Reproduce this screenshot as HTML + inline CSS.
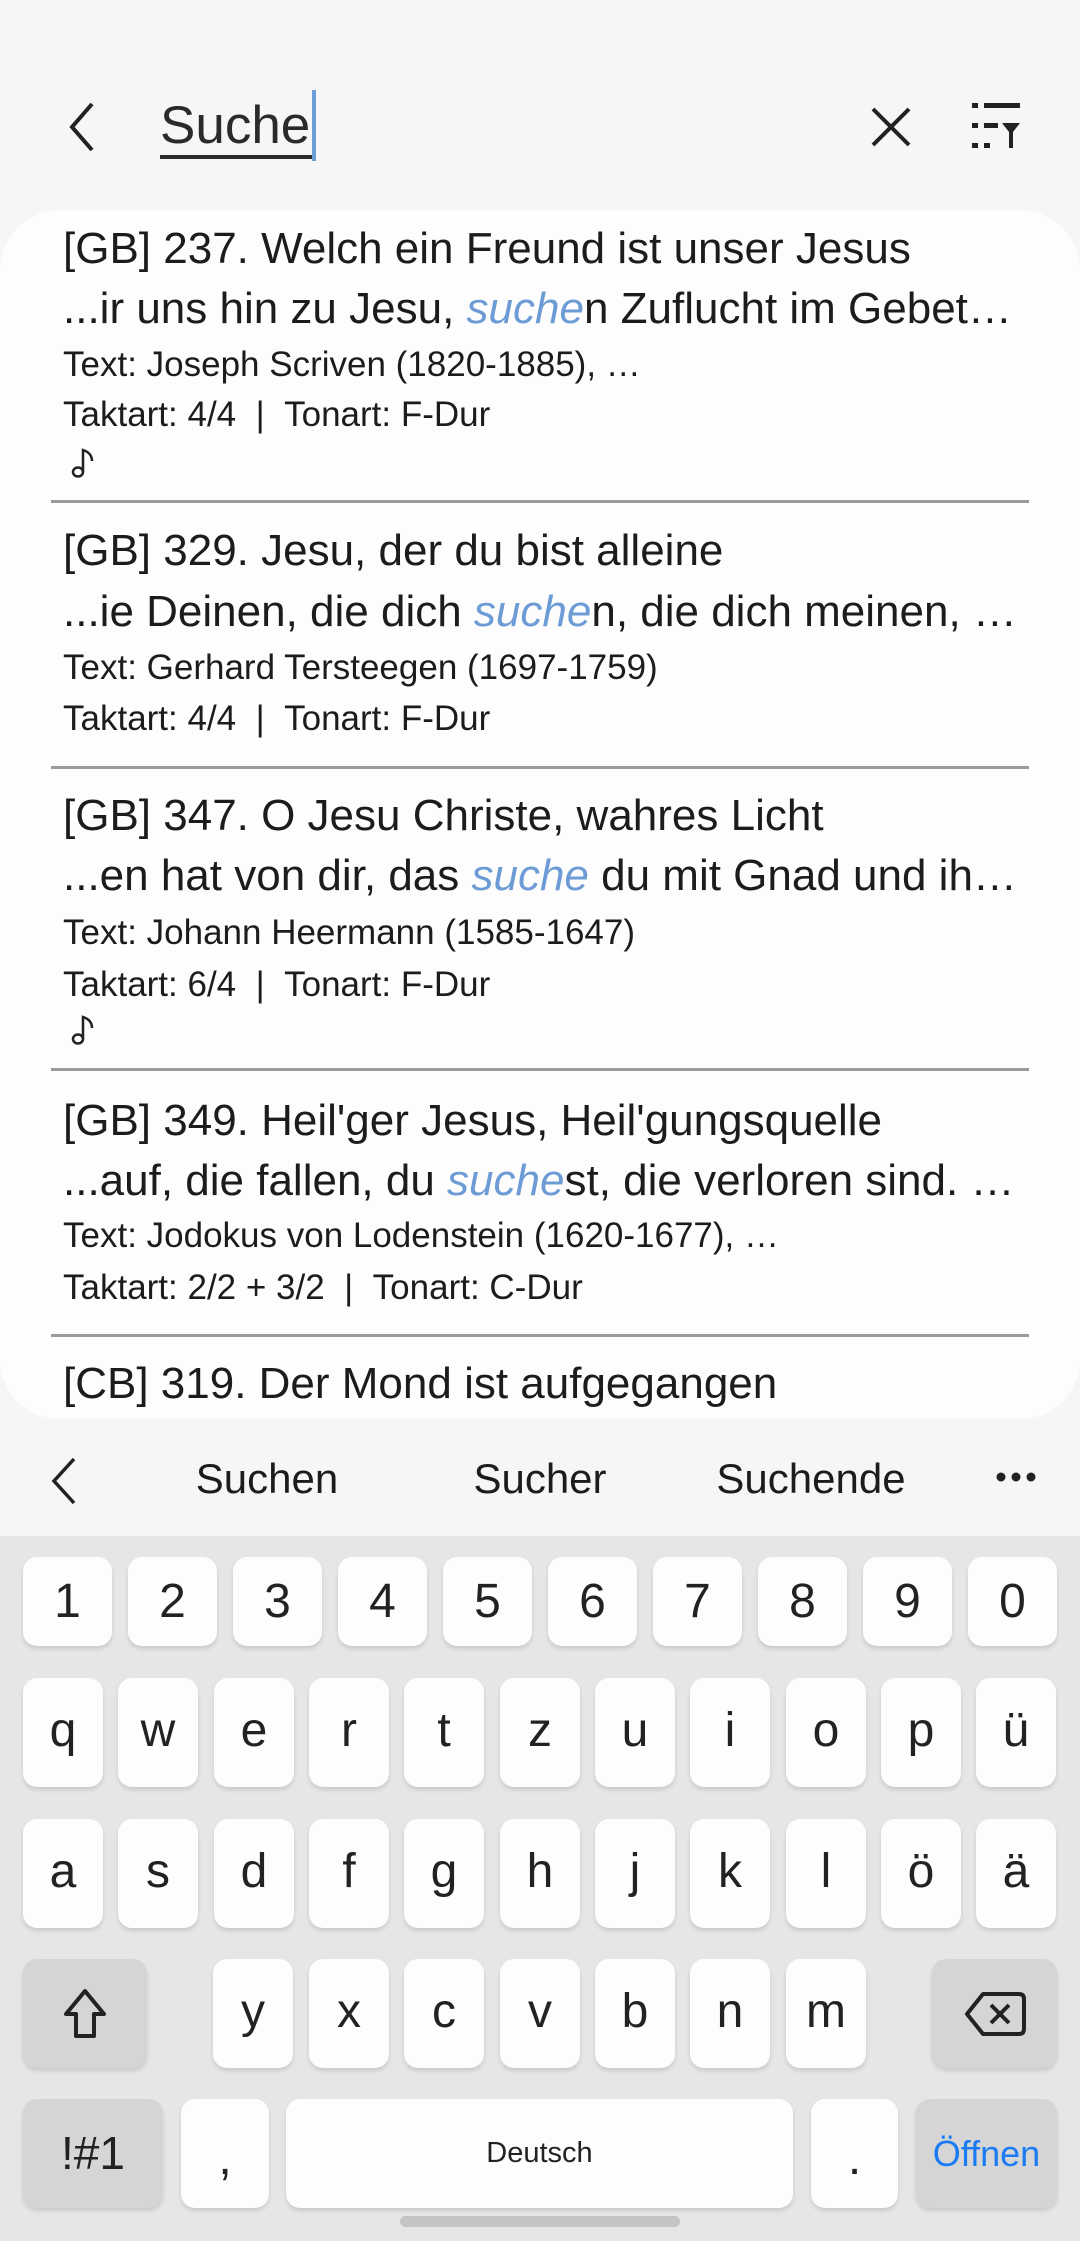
<!DOCTYPE html>
<html><head><meta charset="utf-8"><style>
*{margin:0;padding:0;box-sizing:border-box}
body{width:1080px;height:2241px;background:#f6f6f6;font-family:"Liberation Sans",sans-serif;color:#1c1c1c;position:relative;overflow:hidden}
.a{position:absolute;white-space:nowrap}
.t{font-size:44px;left:63px;line-height:44px}
.s{font-size:35px;left:63px;line-height:35px}
.h{color:#6d9bd6;font-style:italic}
.ell{overflow:hidden;text-overflow:ellipsis;width:955px}
.div{position:absolute;left:51px;width:978px;height:3px;background:#9a9a9a}
.card{position:absolute;left:0;top:210px;width:1080px;height:1209px;background:#fdfdfd;border-radius:60px;overflow:hidden}
.kb{position:absolute;left:0;top:1536px;width:1080px;height:705px;background:#e6e6e6}
.k{position:absolute;background:#fdfdfd;border-radius:14px;box-shadow:0 3px 4px rgba(0,0,0,.12);font-size:48px;text-align:center;color:#222}
.g{background:#d5d5d5}
</style></head><body>
<svg class="a" style="left:64px;top:100px" width="34" height="54" viewBox="0 0 34 54"><path d="M28 4 L8 27 L28 50" fill="none" stroke="#222" stroke-width="4"/></svg>
<div class="a" style="left:160px;top:96px;font-size:53px;line-height:60px;color:#2a2a2a">Suche</div>
<div class="a" style="left:160px;top:155px;width:153px;height:4px;background:#2a2a2a"></div>
<div class="a" style="left:312px;top:90px;width:4px;height:71px;background:#6d9bd6"></div>
<svg class="a" style="left:870px;top:106px" width="42" height="42" viewBox="0 0 42 42"><path d="M3 3L39 39M39 3L3 39" stroke="#222" stroke-width="4"/></svg>
<svg class="a" style="left:972px;top:103px" width="50" height="48" viewBox="0 0 50 48"><g fill="#222"><rect x="0" y="0" width="6" height="5"/><rect x="12" y="0" width="36" height="5"/><rect x="0" y="20" width="6" height="5"/><rect x="12" y="20" width="14" height="5"/><rect x="0" y="40" width="6" height="5"/><rect x="12" y="40" width="6" height="5"/><path d="M30 20H48L41 29V45H37V29Z"/></g></svg>

<div class="card"></div>
<div class="a t" style="top:227px">[GB] 237. Welch ein Freund ist unser Jesus</div>
<div class="a t ell" style="top:287px">...ir uns hin zu Jesu, <span class="h">suche</span>n Zuflucht im Gebet…</div>
<div class="a s" style="top:347px">Text: Joseph Scriven (1820-1885), …</div>
<div class="a s" style="top:397px">Taktart: 4/4 &nbsp;| &nbsp;Tonart: F-Dur</div>
<svg class="a" style="left:70px;top:447px" width="28" height="32" viewBox="0 0 28 32"><ellipse cx="8" cy="25" rx="5" ry="4.5" fill="none" stroke="#222" stroke-width="2.5"/><path d="M13 25V3Q22 6 22 14" fill="none" stroke="#222" stroke-width="2.5"/></svg>
<div class="div" style="top:500px"></div>
<div class="a t" style="top:529px">[GB] 329. Jesu, der du bist alleine</div>
<div class="a t ell" style="top:590px">...ie Deinen, die dich <span class="h">suche</span>n, die dich meinen, …</div>
<div class="a s" style="top:650px">Text: Gerhard Tersteegen (1697-1759)</div>
<div class="a s" style="top:701px">Taktart: 4/4 &nbsp;| &nbsp;Tonart: F-Dur</div>
<div class="div" style="top:766px"></div>
<div class="a t" style="top:794px">[GB] 347. O Jesu Christe, wahres Licht</div>
<div class="a t ell" style="top:854px">...en hat von dir, das <span class="h">suche</span> du mit Gnad und ih…</div>
<div class="a s" style="top:915px">Text: Johann Heermann (1585-1647)</div>
<div class="a s" style="top:967px">Taktart: 6/4 &nbsp;| &nbsp;Tonart: F-Dur</div>
<svg class="a" style="left:70px;top:1014px" width="28" height="32" viewBox="0 0 28 32"><ellipse cx="8" cy="25" rx="5" ry="4.5" fill="none" stroke="#222" stroke-width="2.5"/><path d="M13 25V3Q22 6 22 14" fill="none" stroke="#222" stroke-width="2.5"/></svg>
<div class="div" style="top:1068px"></div>
<div class="a t" style="top:1099px">[GB] 349. Heil'ger Jesus, Heil'gungsquelle</div>
<div class="a t ell" style="top:1159px">...auf, die fallen, du <span class="h">suche</span>st, die verloren sind. …</div>
<div class="a s" style="top:1218px">Text: Jodokus von Lodenstein (1620-1677), …</div>
<div class="a s" style="top:1270px">Taktart: 2/2 + 3/2 &nbsp;| &nbsp;Tonart: C-Dur</div>
<div class="div" style="top:1334px"></div>
<div class="a" style="left:0;top:1340px;width:1080px;height:79px;overflow:hidden">
<div class="a t" style="top:22px">[CB] 319. Der Mond ist aufgegangen</div></div>
<div class="a" style="left:0;top:1419px;width:1080px;height:117px;background:#f6f6f6"></div>
<svg class="a" style="left:48px;top:1456px" width="30" height="50" viewBox="0 0 30 50"><path d="M26 3L6 25L26 47" fill="none" stroke="#222" stroke-width="3.5"/></svg>
<div class="a" style="left:167px;top:1455px;width:200px;text-align:center;font-size:42px">Suchen</div>
<div class="a" style="left:440px;top:1455px;width:200px;text-align:center;font-size:42px">Sucher</div>
<div class="a" style="left:691px;top:1455px;width:240px;text-align:center;font-size:42px">Suchende</div>
<svg class="a" style="left:995px;top:1471px" width="42" height="12"><circle cx="6" cy="6" r="4.5" fill="#222"/><circle cx="21" cy="6" r="4.5" fill="#222"/><circle cx="36" cy="6" r="4.5" fill="#222"/></svg>
<div class="kb"></div>
<div class="k" style="left:23px;top:1557px;width:89px;height:89px;line-height:89px">1</div>
<div class="k" style="left:128px;top:1557px;width:89px;height:89px;line-height:89px">2</div>
<div class="k" style="left:233px;top:1557px;width:89px;height:89px;line-height:89px">3</div>
<div class="k" style="left:338px;top:1557px;width:89px;height:89px;line-height:89px">4</div>
<div class="k" style="left:443px;top:1557px;width:89px;height:89px;line-height:89px">5</div>
<div class="k" style="left:548px;top:1557px;width:89px;height:89px;line-height:89px">6</div>
<div class="k" style="left:653px;top:1557px;width:89px;height:89px;line-height:89px">7</div>
<div class="k" style="left:758px;top:1557px;width:89px;height:89px;line-height:89px">8</div>
<div class="k" style="left:863px;top:1557px;width:89px;height:89px;line-height:89px">9</div>
<div class="k" style="left:968px;top:1557px;width:89px;height:89px;line-height:89px">0</div>
<div class="k" style="left:23px;top:1678px;width:80px;height:109px;line-height:105px">q</div>
<div class="k" style="left:118px;top:1678px;width:80px;height:109px;line-height:105px">w</div>
<div class="k" style="left:214px;top:1678px;width:80px;height:109px;line-height:105px">e</div>
<div class="k" style="left:309px;top:1678px;width:80px;height:109px;line-height:105px">r</div>
<div class="k" style="left:404px;top:1678px;width:80px;height:109px;line-height:105px">t</div>
<div class="k" style="left:500px;top:1678px;width:80px;height:109px;line-height:105px">z</div>
<div class="k" style="left:595px;top:1678px;width:80px;height:109px;line-height:105px">u</div>
<div class="k" style="left:690px;top:1678px;width:80px;height:109px;line-height:105px">i</div>
<div class="k" style="left:786px;top:1678px;width:80px;height:109px;line-height:105px">o</div>
<div class="k" style="left:881px;top:1678px;width:80px;height:109px;line-height:105px">p</div>
<div class="k" style="left:976px;top:1678px;width:80px;height:109px;line-height:105px">ü</div>
<div class="k" style="left:23px;top:1819px;width:80px;height:109px;line-height:105px">a</div>
<div class="k" style="left:118px;top:1819px;width:80px;height:109px;line-height:105px">s</div>
<div class="k" style="left:214px;top:1819px;width:80px;height:109px;line-height:105px">d</div>
<div class="k" style="left:309px;top:1819px;width:80px;height:109px;line-height:105px">f</div>
<div class="k" style="left:404px;top:1819px;width:80px;height:109px;line-height:105px">g</div>
<div class="k" style="left:500px;top:1819px;width:80px;height:109px;line-height:105px">h</div>
<div class="k" style="left:595px;top:1819px;width:80px;height:109px;line-height:105px">j</div>
<div class="k" style="left:690px;top:1819px;width:80px;height:109px;line-height:105px">k</div>
<div class="k" style="left:786px;top:1819px;width:80px;height:109px;line-height:105px">l</div>
<div class="k" style="left:881px;top:1819px;width:80px;height:109px;line-height:105px">ö</div>
<div class="k" style="left:976px;top:1819px;width:80px;height:109px;line-height:105px">ä</div>
<div class="k g" style="left:23px;top:1959px;width:124px;height:109px"><svg style="margin-top:28px" width="50" height="54" viewBox="0 0 50 54"><path d="M25 4L44 27H34V49H16V27H6Z" fill="none" stroke="#222" stroke-width="4" stroke-linejoin="round"/></svg></div>
<div class="k" style="left:213px;top:1959px;width:80px;height:109px;line-height:105px">y</div>
<div class="k" style="left:309px;top:1959px;width:80px;height:109px;line-height:105px">x</div>
<div class="k" style="left:404px;top:1959px;width:80px;height:109px;line-height:105px">c</div>
<div class="k" style="left:500px;top:1959px;width:80px;height:109px;line-height:105px">v</div>
<div class="k" style="left:595px;top:1959px;width:80px;height:109px;line-height:105px">b</div>
<div class="k" style="left:690px;top:1959px;width:80px;height:109px;line-height:105px">n</div>
<div class="k" style="left:786px;top:1959px;width:80px;height:109px;line-height:105px">m</div>
<div class="k g" style="left:932px;top:1959px;width:125px;height:109px"><svg style="margin-top:32px" width="64" height="46" viewBox="0 0 64 46"><path d="M20 3H56Q61 3 61 8V38Q61 43 56 43H20L4 23Z" fill="none" stroke="#222" stroke-width="4" stroke-linejoin="round"/><path d="M28 14L46 32M46 14L28 32" stroke="#222" stroke-width="4"/></svg></div>
<div class="k g" style="left:23px;top:2099px;width:140px;height:109px;line-height:109px;font-size:46px">!#1</div>
<div class="k" style="left:181px;top:2099px;width:88px;height:109px;line-height:120px;font-size:48px">,</div>
<div class="k" style="left:286px;top:2099px;width:507px;height:109px;line-height:109px;font-size:29px">Deutsch</div>
<div class="k" style="left:811px;top:2099px;width:87px;height:109px;line-height:120px;font-size:48px">.</div>
<div class="k g" style="left:916px;top:2099px;width:141px;height:109px;line-height:109px;font-size:36px;color:#1a7bf2">Öffnen</div>
<div class="a" style="left:400px;top:2216px;width:280px;height:11px;border-radius:6px;background:#c4c4c4"></div>
</body></html>
